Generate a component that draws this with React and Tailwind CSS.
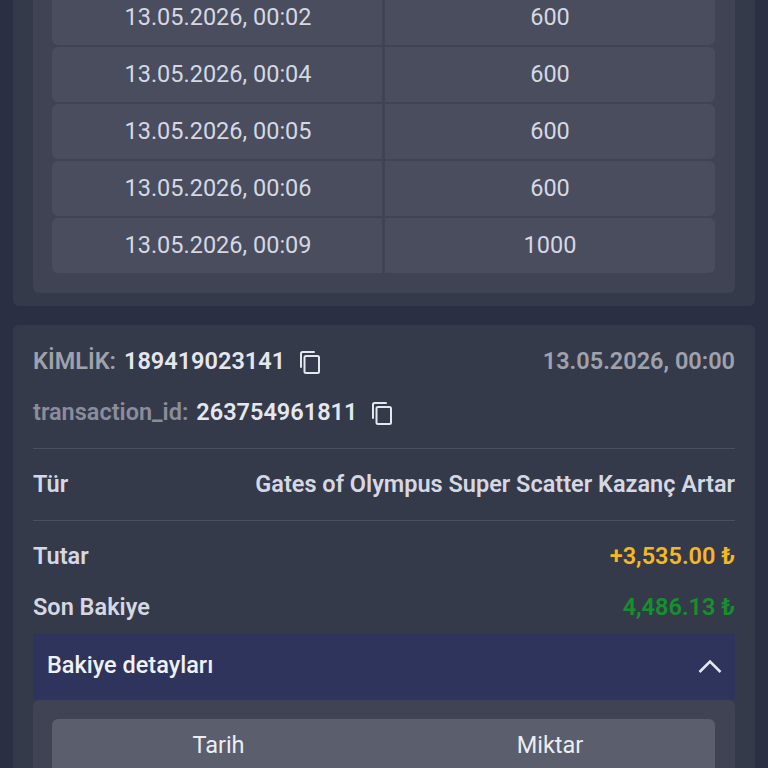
import React from "react";

const rows = [
  ["13.05.2026, 00:02", "600"],
  ["13.05.2026, 00:04", "600"],
  ["13.05.2026, 00:05", "600"],
  ["13.05.2026, 00:06", "600"],
  ["13.05.2026, 00:09", "1000"],
];

function CopyIcon() {
  return (
    <svg width="22" height="24" viewBox="0 0 22 24" fill="none" stroke="#e5e7ef" strokeWidth="2" className="shrink-0">
      <path d="M2 17V3.500A1.500 1.500 0 0 1 3.500 2H15" strokeLinecap="round" />
      <rect x="5.500" y="6" width="14.500" height="17" rx="1.500" />
    </svg>
  );
}

export default function App() {
  return (
    <div className="h-[768px] w-[768px] overflow-hidden bg-[#2a2f44] font-['Roboto',sans-serif]">
      <div className="mx-[13px] mt-[-30px] rounded-b-md bg-[#353a4b] px-5 pb-[13px]">
        <div className="rounded-b-md bg-[#3f4354] px-[19px] pb-5 pt-5">
          <div className="flex flex-col gap-[2px]">
            {rows.map(([date, amount]) => (
              <div key={date} className="flex h-[55px] gap-[3px] text-[23.500px] text-[#d5d8e2]">
                <div className="flex w-[330px] items-center justify-center rounded-l-md bg-[#494d5e] pl-[2px]">{date}</div>
                <div className="flex w-[330px] items-center justify-center rounded-r-md bg-[#494d5e]">{amount}</div>
              </div>
            ))}
          </div>
        </div>
      </div>

      <div className="mx-[13px] mt-[19px] rounded-md bg-[#353a4b] px-5 pt-3">
        <div className="flex h-[50px] items-center justify-between text-[23.500px] font-semibold">
          <div className="flex items-center">
            <span className="text-[#a0a2ab]">KİMLİK:</span>
            <span className="ml-[8px] text-[#e5e7ef]">189419023141</span>
            <span className="ml-[14px]"><CopyIcon /></span>
          </div>
          <span className="text-[#a0a2ab]">13.05.2026, 00:00</span>
        </div>
        <div className="flex h-[52px] items-center text-[23.500px] font-semibold">
          <span className="text-[#8b8e9a]">transaction_id:</span>
          <span className="ml-[8px] text-[#e5e7ef]">263754961811</span>
          <span className="ml-[14px]"><CopyIcon /></span>
        </div>
        <div className="mt-[9px] flex h-[73px] items-center justify-between border-y border-[#4a4e5f] text-[23.500px] font-semibold text-[#d5d8e2]">
          <span>Tür</span>
          <span>Gates of Olympus Super Scatter Kazanç Artar</span>
        </div>
        <div className="flex h-[60px] items-center justify-between pt-[12px] text-[23.500px] font-semibold">
          <span className="text-[#d5d8e2]">Tutar</span>
          <span className="text-[#f5b81f]">+3,535.00 ₺</span>
        </div>
        <div className="flex h-[52px] items-center justify-between pt-[2px] text-[23.500px] font-semibold">
          <span className="text-[#d5d8e2]">Son Bakiye</span>
          <span className="text-[#16902c]">4,486.13 ₺</span>
        </div>
        <div className="flex h-[67px] items-center justify-between bg-[#2e345c] pb-[2px] pl-[14px] pr-3 text-[23.500px] font-medium text-[#f0f1f6]">
          <span>Bakiye detayları</span>
          <svg width="26" height="16" viewBox="0 0 26 16" fill="none" stroke="#e5e7f2" strokeWidth="2.500">
            <path d="M2.500 14L13 3.500 23.500 14" />
          </svg>
        </div>
        <div className="rounded-t-md bg-[#3f4354] pl-[19px] pr-5 pt-[19px]">
          <div className="flex h-[60px] rounded-t-md bg-[#5a5e6d] text-[23.500px] text-[#eceef4]">
            <div className="flex w-[331px] items-center justify-center pb-[6px] pl-[2px]">Tarih</div>
            <div className="flex w-[332px] items-center justify-center pb-[6px] pl-[2px]">Miktar</div>
          </div>
        </div>
      </div>
    </div>
  );
}
